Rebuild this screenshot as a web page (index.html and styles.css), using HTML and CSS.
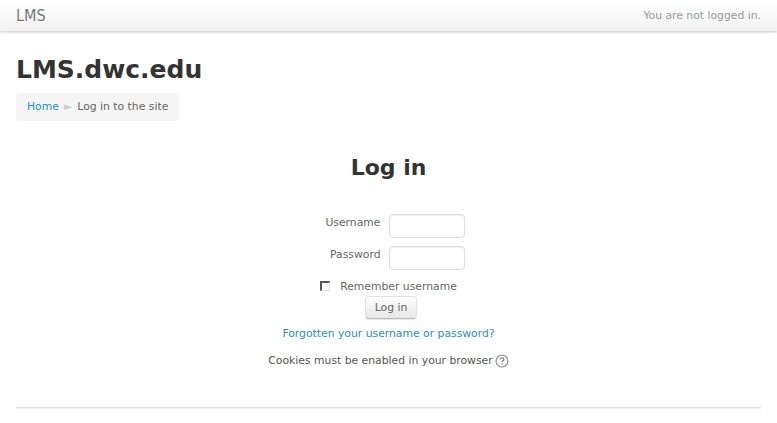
FILE: index.html
```html
<!DOCTYPE html>
<html lang="en">
<head>
<meta charset="utf-8">
<title>LMS.dwc.edu: Log in to the site</title>
<link rel="stylesheet" href="styles.css">
</head>
<body>
<header class="navbar">
  <a class="brand">LMS</a>
  <span class="login-info">You are not logged in.</span>
</header>
<div class="page">
  <h1 class="site-title">LMS.dwc.edu</h1>
  <nav class="crumbs">
    <a class="link">Home</a>
    <span class="sep">►</span>
    <span>Log in to the site</span>
  </nav>
  <main class="login">
    <h2 class="login-title">Log in</h2>
    <form class="login-form">
      <div class="field">
        <label class="field-label">Username</label>
        <input class="field-input" type="text">
      </div>
      <div class="field">
        <label class="field-label">Password</label>
        <input class="field-input" type="password">
      </div>
      <div class="remember">
        <span class="check"></span>
        <span>Remember username</span>
      </div>
      <button class="submit" type="button">Log in</button>
    </form>
    <p class="forgot"><a class="link">Forgotten your username or password?</a></p>
    <p class="cookies">Cookies must be enabled in your browser
      <svg class="help" width="14" height="14" viewBox="0 0 14 14"><circle cx="7" cy="7" r="5.9" fill="#fff" stroke="#999" stroke-width="1.3"/><path d="M5.2 5.6c0-1.1.8-1.8 1.9-1.8s1.8.7 1.8 1.6c0 1.3-1.8 1.4-1.8 2.9" fill="none" stroke="#888" stroke-width="1.3"/><rect x="6.4" y="9.2" width="1.4" height="1.4" fill="#888"/></svg>
    </p>
  </main>
  <hr class="rule">
</div>
</body>
</html>
```
FILE: styles.css
```css
html, body { margin: 0; padding: 0; height: 423px; overflow: hidden; background: #fff; }
body { font-family: "DejaVu Sans", sans-serif; font-size: 10.8px; line-height: 20px; color: #666; }
.navbar {
  height: 31px; box-sizing: border-box; padding: 0 16px; display: flex; justify-content: space-between; align-items: center;
  background: linear-gradient(#fff, #f2f2f2);
  box-shadow: 0 1px 3px rgba(0,0,0,.22);
}
.brand { font-size: 16px; font-stretch: condensed; color: #777; }
.login-info { color: #999; }
.page { padding: 0 16px; }
.site-title { margin: 24px 0 0; font-size: 25px; line-height: 30px; font-weight: 700; color: #333; }
.crumbs {
  display: inline-flex; gap: 5px; align-items: center; height: 28px; margin-top: 8px; padding: 0 11px;
  background: #f5f5f5; border-radius: 4px;
}
.sep { font-size: 11px; color: #ccc; }
.link { color: #2b8cc4; }
.login { text-align: center; }
.login-title { margin: 32px 0 0; font-size: 22px; line-height: 30px; font-weight: 700; color: #333; }
.login-form { display: flex; flex-direction: column; align-items: center; margin-top: 31px; }
.field { display: flex; width: 745px; justify-content: center; margin-bottom: 8px; height: 24px; }
.field-label { width: 100px; text-align: right; margin-right: 8px; margin-left: -32px; line-height: 17px; }
.field-input { width: 76px; height: 24px; box-sizing: border-box; padding: 0; border: 1px solid #ddd; border-radius: 4px; box-shadow: inset 0 1px 1px rgba(0,0,0,.075); background: #fff; }
.remember { display: flex; align-items: center; height: 18px; }
.check { width: 7px; height: 7px; border-style: solid; border-color: #555 #ddd #ddd #555; border-width: 2px 1px 1px 2px; margin-right: 10px; margin-bottom: 2px; }
.submit {
  width: 52px; height: 23px; padding: 0; margin-left: 5px; font: inherit; color: #666;
  border: 1px solid #e2e2e2; border-bottom-color: #bbb; border-radius: 4px;
  background: linear-gradient(#fff, #e6e6e6); box-shadow: 0 1px 1px rgba(0,0,0,.1);
}
.forgot { margin: 5px 0 0; }
.cookies { margin: 7px 0 0; color: #555; display: flex; justify-content: center; align-items: center; gap: 2px; }
.help { display: block; }
.rule { margin: 36px 0 0; border: 0; border-top: 1px solid #e0e0e0; border-bottom: 1px solid #f0f0f0; }
```
